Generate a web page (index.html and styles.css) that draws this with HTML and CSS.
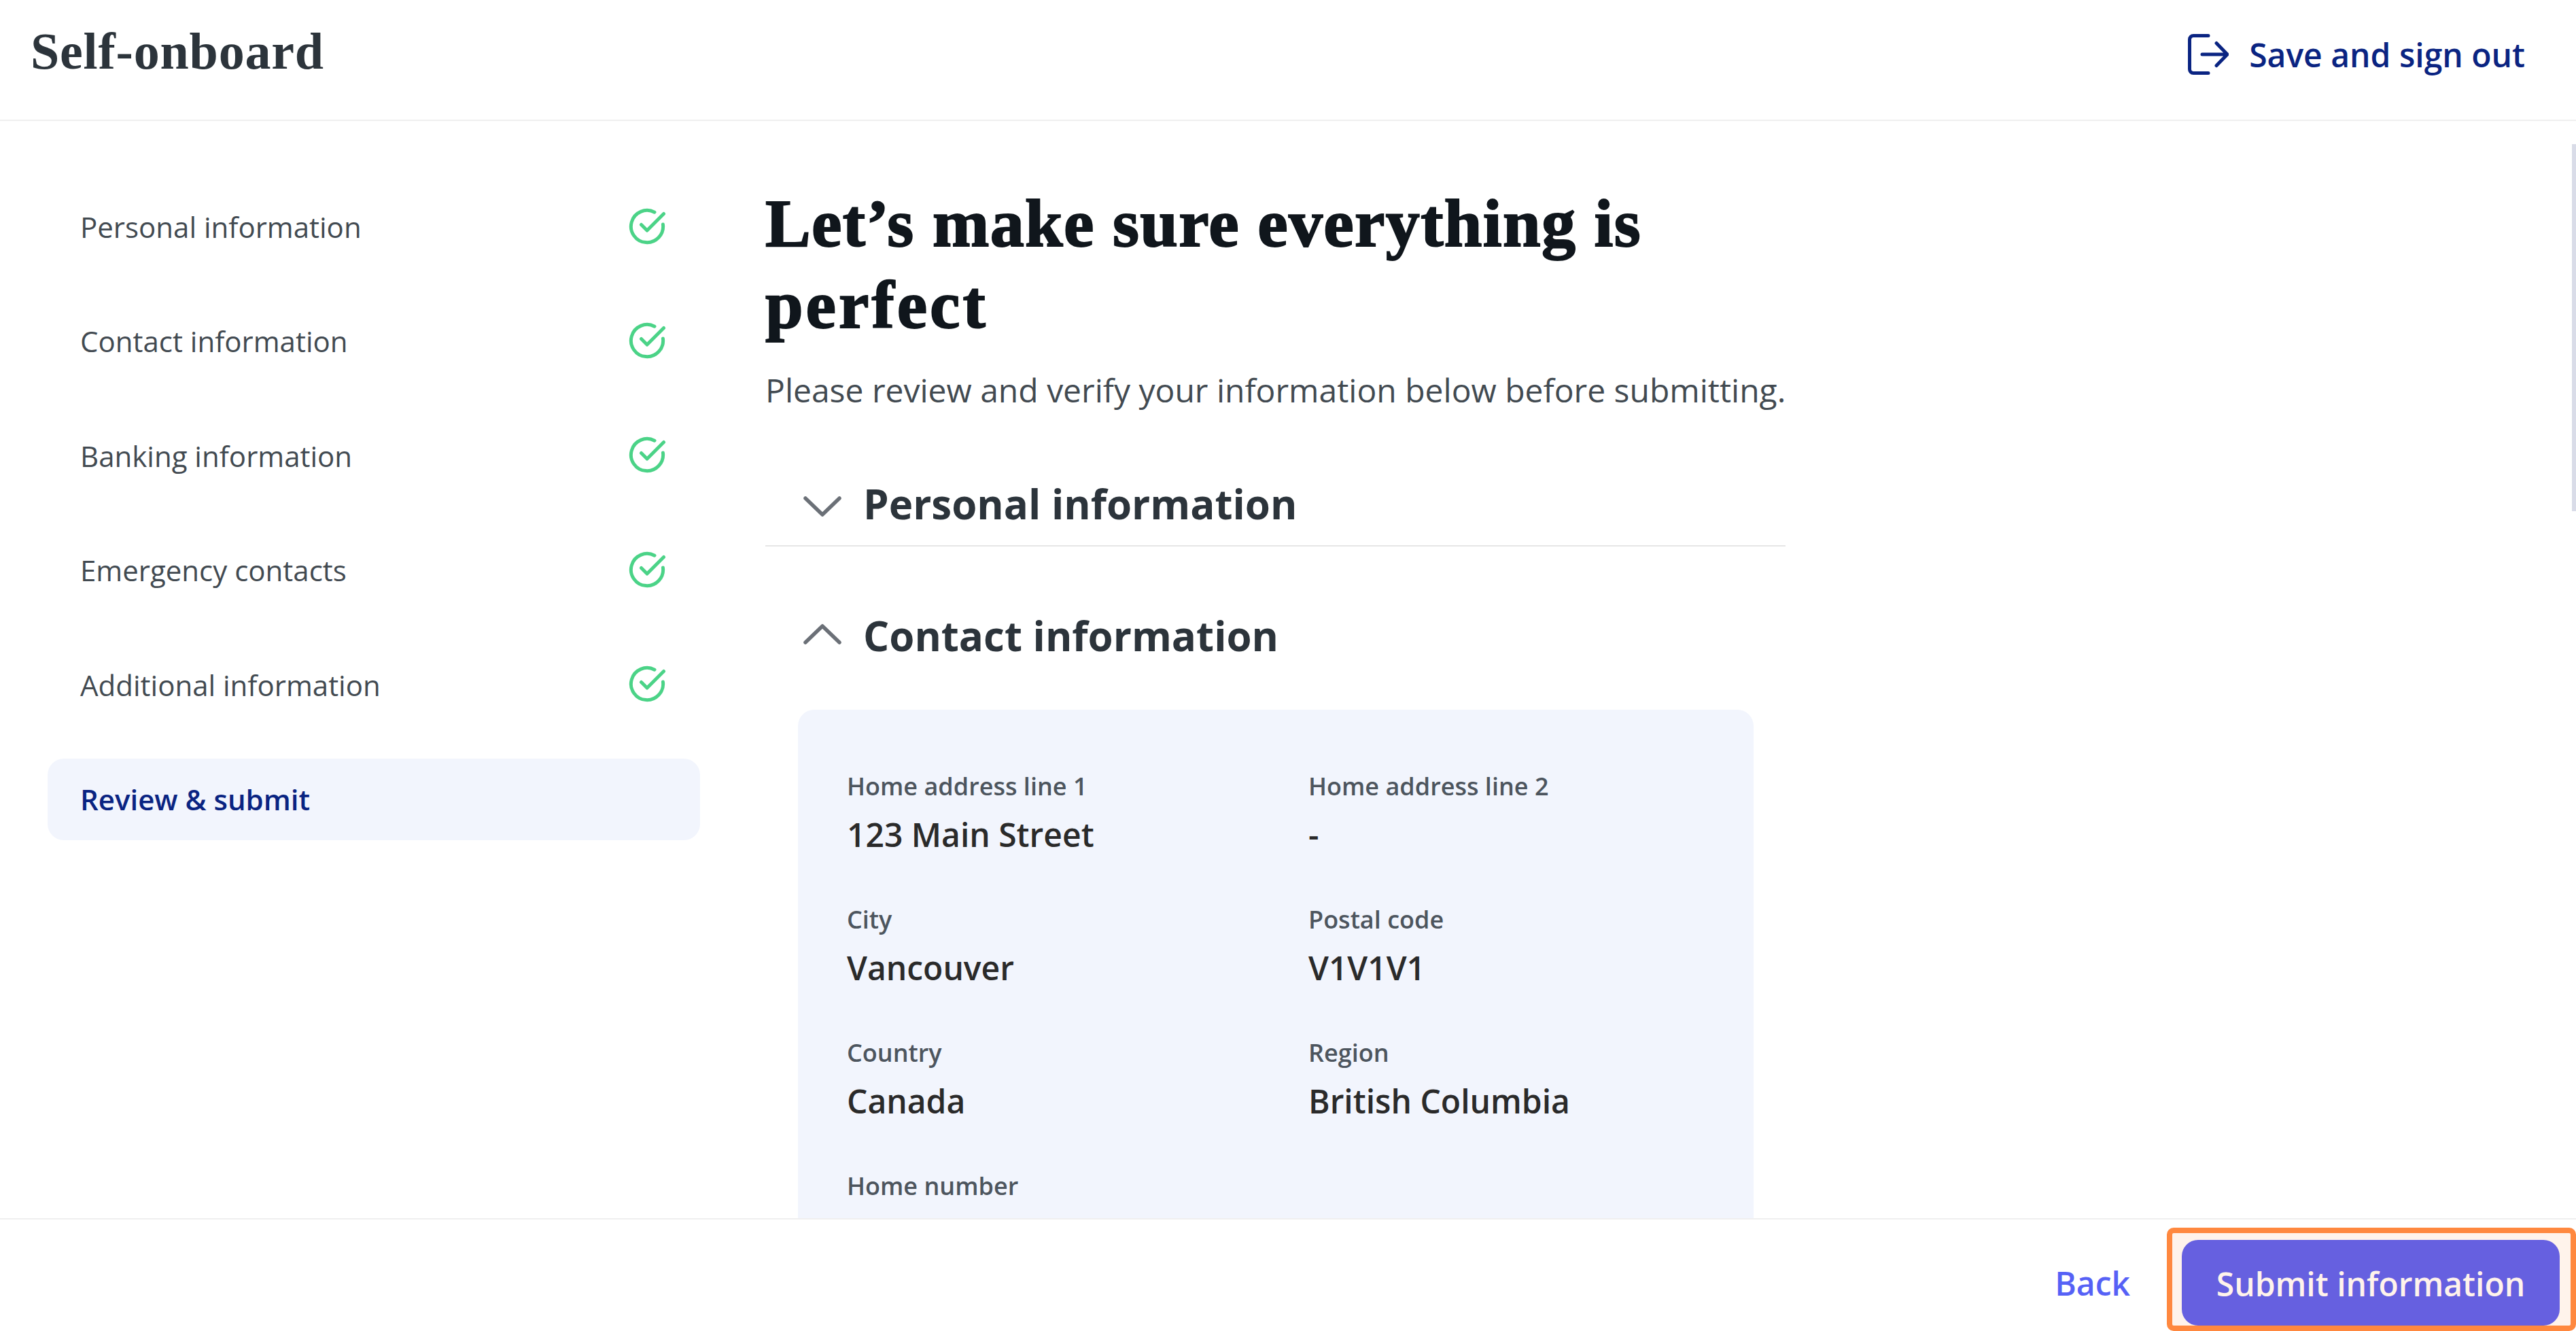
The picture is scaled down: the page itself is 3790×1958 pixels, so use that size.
FILE: index.html
```
<!DOCTYPE html>
<html lang="en">
<head>
  <meta charset="UTF-8">
  <meta name="viewport" content="width=device-width, initial-scale=1.0">
  <title>Self-onboard</title>
  <link rel="stylesheet" href="styles.css">
</head>
<body>

  <!-- Icons -->
  <svg class="sprite" aria-hidden="true">
    <symbol id="icon-check" viewBox="0 0 56 56">
      <path d="M39 7.2A23.6 23.6 0 1 0 51.4 25"/>
      <path d="M19.5 25.5L28 34L52.5 9.5"/>
    </symbol>
    <symbol id="icon-down" viewBox="0 0 56 30">
      <path d="M3 3L28 27L53 3"/>
    </symbol>
    <symbol id="icon-up" viewBox="0 0 56 30">
      <path d="M3 27L28 3L53 27"/>
    </symbol>
  </svg>

  <header class="header">
    <div class="brand">Self-onboard</div>
    <a class="sign-out" href="#">
      <svg class="sign-out-icon" viewBox="0 0 60 60">
        <path d="M30 2.5H8A5.5 5.5 0 0 0 2.5 8V52A5.5 5.5 0 0 0 8 57.5H30"/>
        <path d="M21 30H57M42 13.5L58 30L42 46.5"/>
      </svg>
      <span>Save and sign out</span>
    </a>
  </header>

  <main class="main">
    <nav class="steps">
      <a class="step" href="#">Personal information <svg class="check"><use href="#icon-check"/></svg></a>
      <a class="step" href="#">Contact information <svg class="check"><use href="#icon-check"/></svg></a>
      <a class="step" href="#">Banking information <svg class="check"><use href="#icon-check"/></svg></a>
      <a class="step" href="#">Emergency contacts <svg class="check"><use href="#icon-check"/></svg></a>
      <a class="step" href="#">Additional information <svg class="check"><use href="#icon-check"/></svg></a>
      <a class="step active" href="#">Review &amp; submit</a>
    </nav>

    <section class="content">
      <h1>Let’s make sure everything is <span class="last-word">perfect</span></h1>
      <p class="intro">Please review and verify your information below before submitting.</p>

      <div class="section-head closed">
        <svg class="chevron chevron-down"><use href="#icon-down"/></svg>
        <h2>Personal information</h2>
      </div>

      <div class="section-head">
        <svg class="chevron chevron-up"><use href="#icon-up"/></svg>
        <h2>Contact information</h2>
      </div>

      <dl class="card">
        <div class="field"><dt>Home address line 1</dt><dd>123 Main Street</dd></div>
        <div class="field"><dt>Home address line 2</dt><dd>-</dd></div>
        <div class="field"><dt>City</dt><dd>Vancouver</dd></div>
        <div class="field"><dt>Postal code</dt><dd>V1V1V1</dd></div>
        <div class="field"><dt>Country</dt><dd>Canada</dd></div>
        <div class="field"><dt>Region</dt><dd>British Columbia</dd></div>
        <div class="field"><dt>Home number</dt></div>
      </dl>
    </section>

    <div class="scrollbar"></div>
  </main>

  <footer class="footer">
    <a class="back" href="#">Back</a>
    <div class="highlight">
      <button class="submit">Submit information</button>
    </div>
  </footer>

</body>
</html>
```

FILE: styles.css
```
* {
  box-sizing: border-box;
}

body {
  margin: 0;
  height: 100vh;
  display: flex;
  flex-direction: column;
  overflow: hidden;
  background: #fff;
  color: #2c343b;
  font-family: "Open Sans", "Noto Sans", sans-serif;
}

a {
  text-decoration: none;
}

svg {
  flex: none;
  fill: none;
  stroke-linecap: round;
  stroke-linejoin: round;
}

.sprite {
  position: absolute;
  width: 0;
  height: 0;
}

/* Header */
.header {
  flex: none;
  height: 178px;
  padding: 0 75px 0 45px;
  display: flex;
  justify-content: space-between;
  align-items: flex-start;
  border-bottom: 2px solid #efefef;
}

.brand {
  font-family: "Liberation Serif", serif;
  font-size: 76px;
  font-weight: 700;
  line-height: 150px;
  letter-spacing: 0.8px;
}

.sign-out {
  display: flex;
  align-items: center;
  gap: 30px;
  height: 160px;
  color: #0a2482;
  font-size: 48px;
  font-weight: 600;
}

.sign-out-icon {
  width: 60px;
  height: 60px;
  stroke: #0a2482;
  stroke-width: 5;
}

/* Main area */
.main {
  flex: 1;
  min-height: 0;
  display: flex;
  overflow: hidden;
}

.steps {
  flex: none;
  width: 960px;
  margin: 96px 96px 0 70px;
  display: flex;
  flex-direction: column;
  gap: 48.4px;
}

.step {
  flex: none;
  height: 120px;
  padding: 0 50px 1px 48px;
  display: flex;
  align-items: center;
  justify-content: space-between;
  border-radius: 24px;
  color: #424a51;
  font-size: 42px;
  font-weight: 400;
}

.step.active {
  background: #f2f5fd;
  color: #0a2482;
  font-weight: 600;
}

.check {
  width: 56px;
  height: 56px;
  margin-bottom: 2px;
  stroke: #4bd387;
  stroke-width: 5;
}

.content {
  flex: none;
  width: 1501px;
  padding-top: 91px;
}

h1 {
  margin: 0;
  color: #10161c;
  font-family: "Liberation Serif", serif;
  font-size: 100px;
  line-height: 120px;
  letter-spacing: 1.35px;
  -webkit-text-stroke: 2px #10161c;
}

.last-word {
  letter-spacing: 4px;
}

.intro {
  margin: 29px 0 72px;
  color: #424a51;
  font-size: 48px;
  font-weight: 400;
  line-height: 72px;
  white-space: nowrap;
}

.section-head {
  height: 120px;
  padding-left: 56px;
  display: flex;
  align-items: center;
  gap: 32px;
}

.section-head.closed {
  height: 122px;
  margin-bottom: 72px;
  border-bottom: 2px solid #e6e6e6;
}

.chevron {
  width: 56px;
  height: 30px;
  stroke: #6b7077;
  stroke-width: 5.5;
}

.chevron-down {
  margin-top: 6px;
}

.chevron-up {
  margin-bottom: 6px;
}

h2 {
  margin: 0 0 2px;
  font-size: 60px;
  font-weight: 700;
}

.card {
  margin: 48px 47px 0 48px;
  padding: 89px 72px;
  display: grid;
  grid-template-columns: 1fr 1fr;
  gap: 65px 96px;
  border-radius: 24px;
  background: #f2f5fd;
}

.field {
  height: 131px;
}

dt {
  color: #4d555e;
  font-size: 36px;
  font-weight: 600;
  line-height: 48px;
}

dd {
  margin: 11px 0 0;
  color: #2a2a2a;
  font-size: 48px;
  font-weight: 600;
  line-height: 72px;
}

.scrollbar {
  width: 6px;
  height: 540px;
  margin: 34px 0 0 auto;
  background: #d9dce8;
}

/* Footer */
.footer {
  flex: none;
  height: 166px;
  padding-top: 12px;
  display: flex;
  justify-content: flex-end;
  align-items: flex-start;
  gap: 54px;
  border-top: 2px solid #efefef;
}

.back {
  color: #5661f6;
  font-size: 48px;
  font-weight: 600;
  line-height: 164px;
}

.highlight {
  width: 602px;
  height: 152px;
  padding: 10px 16px 0 14px;
  border: 8px solid #ff883f;
  border-radius: 10px;
  background: #fff3eb;
}

.submit {
  width: 100%;
  height: 126px;
  padding: 2px 0 0;
  border: none;
  border-radius: 24px;
  background: #6660e0;
  color: #fff3eb;
  font-family: inherit;
  font-size: 48px;
  font-weight: 600;
}
```
